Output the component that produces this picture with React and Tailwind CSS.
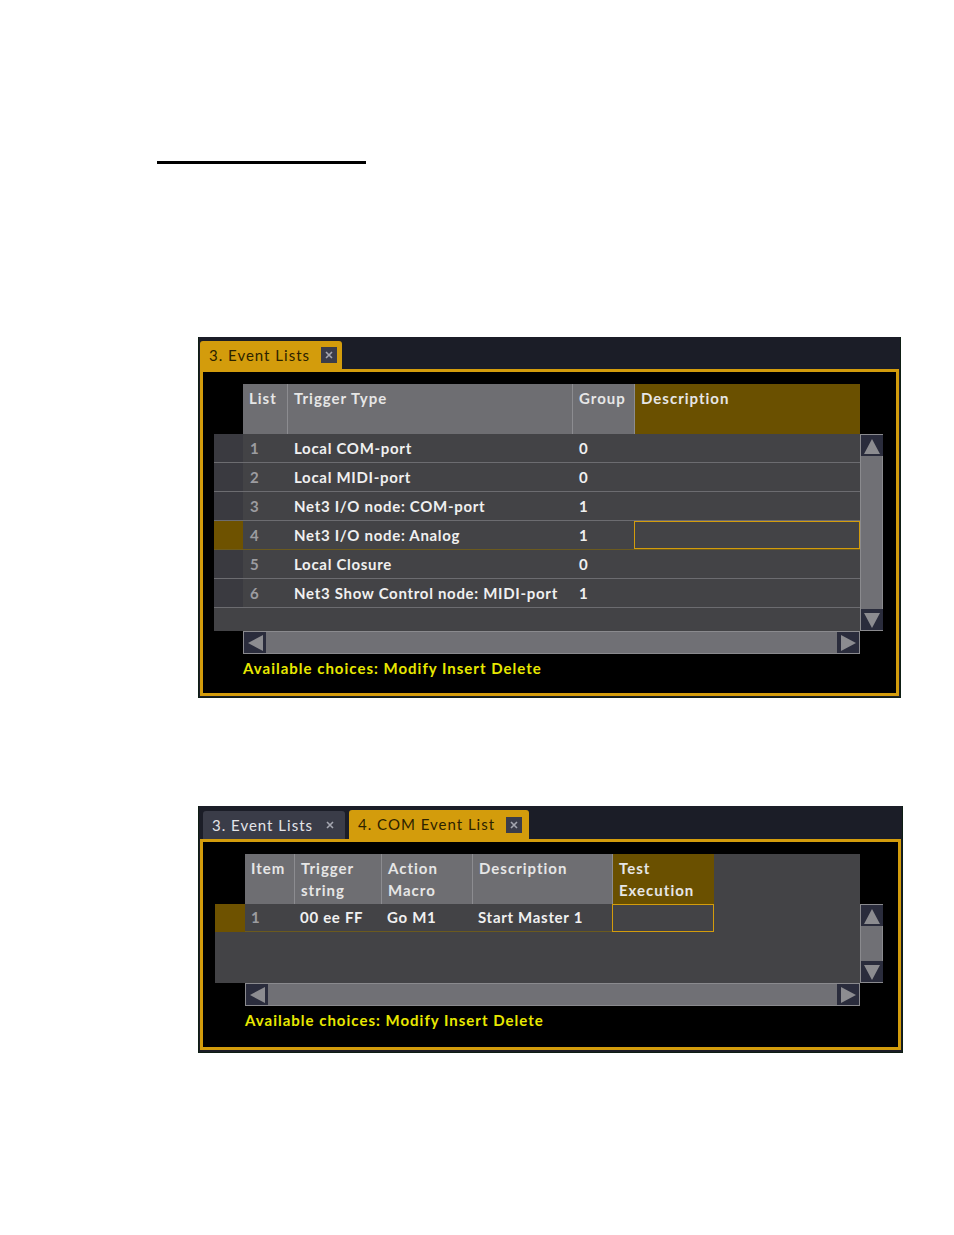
import React from "react";

const font = { fontFamily: "Lato, 'Open Sans', sans-serif" };

const CloseBox = ({ boxed }) => (
  <div
    className={`w-[16px] h-[16px] flex items-center justify-center ${
      boxed ? "bg-[#3a3c4a]" : ""
    }`}
  >
    <svg width="10" height="10" viewBox="0 0 10 10">
      <path d="M2 2 L8 8 M8 2 L2 8" stroke="#a4a6b0" strokeWidth="1.6" />
    </svg>
  </div>
);

const Arrow = ({ dir }) => {
  const pts = {
    up: "2,18 10,3 18,18",
    down: "2,3 10,18 18,3",
    left: "18,2 3,10 18,18",
    right: "3,2 18,10 3,18",
  }[dir];
  return (
    <div className="w-[22px] h-[21px] bg-[#2a2c3c] flex items-center justify-center shrink-0">
      <svg width="20" height="20" viewBox="0 0 20 20">
        <polygon points={pts} fill="#8c8c90" />
      </svg>
    </div>
  );
};

const VScroll = ({ h }) => (
  <div
    className="w-[23px] bg-[#707075] border border-[#8a8a8e] flex flex-col justify-between"
    style={{ height: h }}
  >
    <Arrow dir="up" />
    <Arrow dir="down" />
  </div>
);

const HScroll = ({ w }) => (
  <div
    className="h-[23px] bg-[#707075] border border-[#8a8a8e] flex items-center justify-between"
    style={{ width: w }}
  >
    <Arrow dir="left" />
    <Arrow dir="right" />
  </div>
);

const HeadCell = ({ w, gold, children, first }) => (
  <div
    className={`h-full pl-[6px] pt-[3px] text-[15px] font-bold leading-[22px] tracking-[1px] text-[#e6e6e6] ${
      gold ? "bg-[#6a5000]" : "bg-[#6e6e72]"
    } ${first ? "" : "border-l border-[#8c8c90]"}`}
    style={{ width: w }}
  >
    {children}
  </div>
);

const cell = "text-[15px] font-bold tracking-[0.7px] whitespace-nowrap";

const rows1 = [
  ["1", "Local COM-port", "0"],
  ["2", "Local MIDI-port", "0"],
  ["3", "Net3 I/O node: COM-port", "1"],
  ["4", "Net3 I/O node: Analog", "1"],
  ["5", "Local Closure", "0"],
  ["6", "Net3 Show Control node: MIDI-port", "1"],
];

const EventListsPanel = () => (
  <div className="ml-[198px] mt-[173px] w-[703px] h-[361px] bg-[#1b1d27] border-l border-b border-r border-[#0e1e14] flex flex-col">
    {/* Tabs */}
    <div className="h-[32px] flex items-end pl-[1px]">
      <div className="h-[28px] w-[142px] bg-[#d39c0c] rounded-t-[3px] flex items-center pl-[9px] gap-[11px]">
        <span className="text-[15px] tracking-[1px] text-[#2c2200] leading-none">3. Event Lists</span>
        <CloseBox boxed />
      </div>
    </div>

    {/* Frame */}
    <div className="mx-[1px] mb-[1px] flex-1 border-[3px] border-[#d39c0c] bg-black pl-[11px] pt-[12px]">
      {/* Header */}
      <div className="flex h-[50px]">
        <div className="w-[29px]" />
        <HeadCell w={44} first>List</HeadCell>
        <HeadCell w={285}>Trigger Type</HeadCell>
        <HeadCell w={62}>Group</HeadCell>
        <HeadCell w={226} gold>Description</HeadCell>
      </div>

      {/* Body */}
      <div className="flex">
        <div className="w-[646px] h-[197px] bg-[#434346] flex flex-col">
          {rows1.map((r, i) => {
            const sel = i === 3;
            return (
              <div
                key={r[0]}
                className={`flex h-[29px] border-b ${
                  sel ? "border-[#6b5a1e]" : "border-[#6c6c70]"
                }`}
              >
                <div
                  className={`w-[29px] h-full ${sel ? "bg-[#6e5200]" : "bg-[#3a3a40]"}`}
                />
                <div className={`w-[44px] pl-[7px] leading-[28px] text-[#9c9ca0] ${cell}`}>
                  {r[0]}
                </div>
                <div className={`w-[285px] pl-[7px] leading-[28px] text-[#f0f0f0] ${cell}`}>
                  {r[1]}
                </div>
                <div className={`w-[62px] pl-[7px] leading-[28px] text-[#f0f0f0] ${cell}`}>
                  {r[2]}
                </div>
                <div
                  className={`w-[226px] h-full ${
                    sel ? "border border-[#d39c0c]" : ""
                  }`}
                />
              </div>
            );
          })}
        </div>
        <VScroll h={197} />
      </div>

      <div className="ml-[29px]">
        <HScroll w={617} />
      </div>

      <div className="ml-[29px] mt-[3px] text-[15px] font-bold tracking-[1px] text-[#e8e800]">
        Available choices: Modify Insert Delete
      </div>
    </div>
  </div>
);

const ComEventPanel = () => (
  <div className="ml-[198px] mt-[108px] w-[705px] h-[247px] bg-[#1b1d27] border-l border-b border-r border-[#0e1e14] flex flex-col">
    {/* Tabs */}
    <div className="h-[33px] flex items-end pl-[4px] gap-[4px]">
      <div className="h-[28px] w-[142px] bg-[#3a3c48] rounded-t-[3px] flex items-center pl-[9px] gap-[9px]">
        <span className="text-[15px] tracking-[1px] text-[#e4e4e8] leading-none">3. Event Lists</span>
        <CloseBox />
      </div>
      <div className="h-[29px] w-[180px] bg-[#d39c0c] rounded-t-[3px] flex items-center pl-[9px] gap-[11px]">
        <span className="text-[15px] tracking-[1px] text-[#2c2200] leading-none">4. COM Event List</span>
        <CloseBox boxed />
      </div>
    </div>

    {/* Frame */}
    <div className="mx-[1px] mb-[2px] flex-1 border-[3px] border-[#d39c0c] bg-black pl-[12px] pt-[12px]">
      {/* Header */}
      <div className="flex h-[50px]">
        <div className="w-[30px]" />
        <HeadCell w={49} first>Item</HeadCell>
        <HeadCell w={87}>
          Trigger
          <br />
          string
        </HeadCell>
        <HeadCell w={91}>
          Action
          <br />
          Macro
        </HeadCell>
        <HeadCell w={140}>Description</HeadCell>
        <HeadCell w={102} gold>
          Test
          <br />
          Execution
        </HeadCell>
        <div className="w-[146px] h-full bg-[#434346]" />
      </div>

      {/* Body */}
      <div className="flex">
        <div className="w-[645px] h-[79px] bg-[#434346] flex flex-col">
          <div className="flex h-[28px]">
            <div className="w-[30px] h-full bg-[#6e5200]" />
            <div className="flex h-full border-b border-[#6b5a1e]">
              <div className={`w-[49px] pl-[6px] leading-[27px] text-[#9c9ca0] ${cell}`}>1</div>
              <div className={`w-[87px] pl-[6px] leading-[27px] text-[#f0f0f0] ${cell}`}>
                00 ee FF
              </div>
              <div className={`w-[91px] pl-[6px] leading-[27px] text-[#f0f0f0] ${cell}`}>
                Go M1
              </div>
              <div className={`w-[140px] pl-[6px] leading-[27px] text-[#f0f0f0] ${cell}`}>
                Start Master 1
              </div>
            </div>
            <div className="w-[102px] h-full border border-[#d39c0c]" />
          </div>
        </div>
        <VScroll h={79} />
      </div>

      <div className="ml-[30px]">
        <HScroll w={615} />
      </div>

      <div className="ml-[30px] mt-[3px] text-[15px] font-bold tracking-[1px] text-[#e8e800]">
        Available choices: Modify Insert Delete
      </div>
    </div>
  </div>
);

export default function App() {
  return (
    <div className="w-[954px] h-[1235px] bg-white overflow-hidden pt-[161px]" style={font}>
      <div className="ml-[157px] w-[209px] h-[3px] bg-black" />
      <EventListsPanel />
      <ComEventPanel />
    </div>
  );
}
